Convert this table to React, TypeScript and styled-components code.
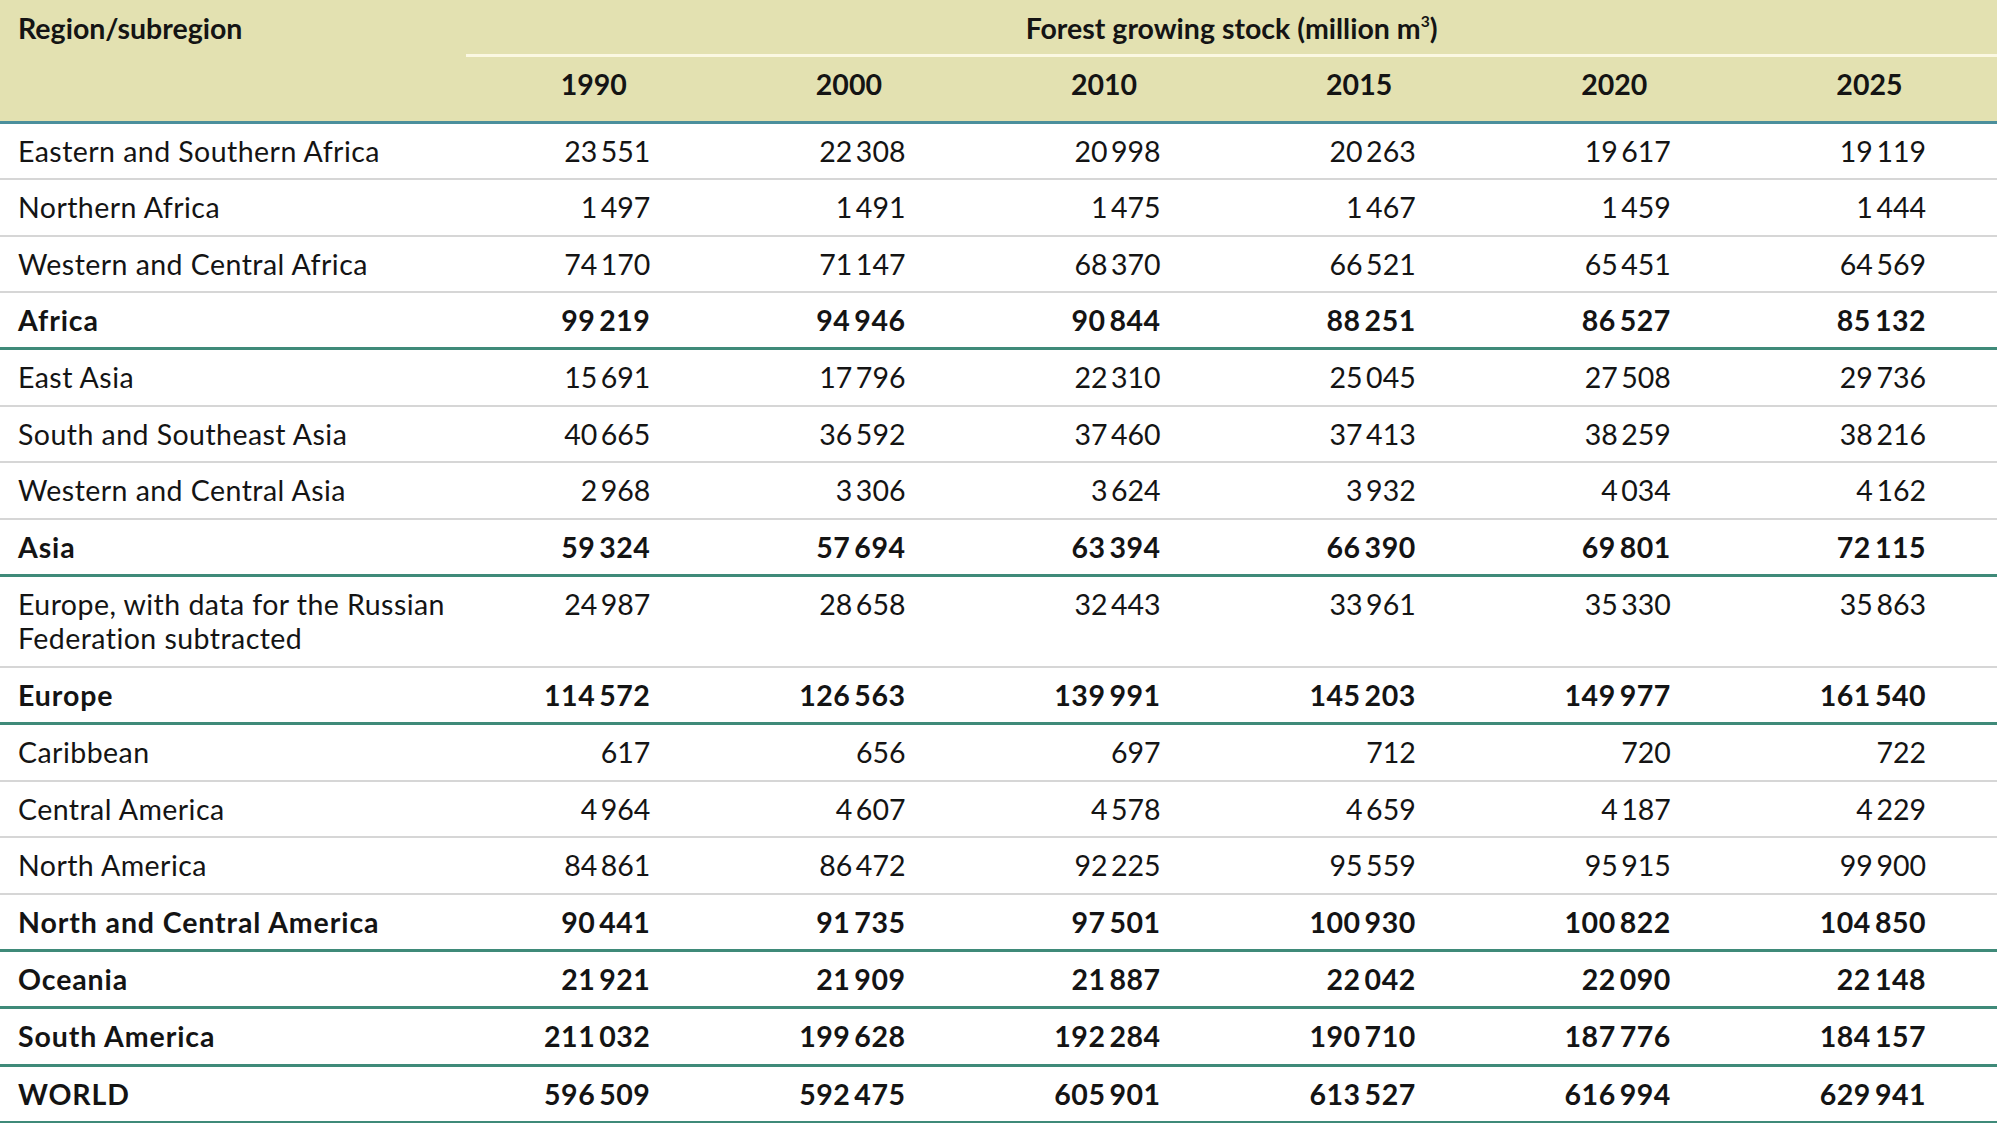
import React from "react";
import styled, { createGlobalStyle } from "styled-components";

const GlobalStyle = createGlobalStyle`
  html, body { margin: 0; padding: 0; background: #ffffff; }
  body { font-family: Lato, "Noto Sans", sans-serif; color: #141414; }
`;

const Table = styled.table`
  width: 1997px;
  table-layout: fixed;
  border-collapse: separate;
  border-spacing: 0;
  font-family: Lato, "Noto Sans", sans-serif;
  font-size: 28.5px;
  line-height: 34.4px;
`;

const Head = styled.thead`
  background: #e3e1b1;
`;

const RegionHead = styled.th`
  text-align: left;
  vertical-align: top;
  font-weight: 700;
  padding: 11px 0 0 18px;
  border-bottom: 3px solid #4b8f9c;
`;

const GroupHead = styled.th`
  text-align: center;
  font-weight: 700;
  padding: 11px 0 9px;
  border-bottom: 3px solid #fbf8e2;
`;

const YearHead = styled.th`
  text-align: center;
  font-weight: 700;
  padding: 10px 0 19px;
  border-bottom: 3px solid #4b8f9c;
`;

const Sup = styled.sup`
  font-size: 0.55em;
  line-height: 0;
  vertical-align: 0.75em;
`;

const Cell = styled.td<{ $total: boolean; $num?: boolean }>`
  vertical-align: top;
  text-align: ${(p) => (p.$num ? "right" : "left")};
  padding: ${(p) => (p.$num ? "10px 71px 10px 0" : "10px 0 10px 18px")};
  font-weight: ${(p) => (p.$total ? 700 : 400)};
  letter-spacing: ${(p) =>
    p.$num ? (p.$total ? "0.5px" : "0") : p.$total ? "0.9px" : "0.45px"};
  border-bottom: ${(p) => (p.$total ? "3px solid #3f8a79" : "2px solid #d6d6d6")};
  white-space: ${(p) => (p.$num ? "nowrap" : "normal")};
`;

type Row = { name: string; values: string[]; total?: boolean };

const rows: Row[] = [
  { name: "Eastern and Southern Africa", values: ["23 551", "22 308", "20 998", "20 263", "19 617", "19 119"] },
  { name: "Northern Africa", values: ["1 497", "1 491", "1 475", "1 467", "1 459", "1 444"] },
  { name: "Western and Central Africa", values: ["74 170", "71 147", "68 370", "66 521", "65 451", "64 569"] },
  { name: "Africa", total: true, values: ["99 219", "94 946", "90 844", "88 251", "86 527", "85 132"] },
  { name: "East Asia", values: ["15 691", "17 796", "22 310", "25 045", "27 508", "29 736"] },
  { name: "South and Southeast Asia", values: ["40 665", "36 592", "37 460", "37 413", "38 259", "38 216"] },
  { name: "Western and Central Asia", values: ["2 968", "3 306", "3 624", "3 932", "4 034", "4 162"] },
  { name: "Asia", total: true, values: ["59 324", "57 694", "63 394", "66 390", "69 801", "72 115"] },
  { name: "Europe, with data for the Russian Federation subtracted", values: ["24 987", "28 658", "32 443", "33 961", "35 330", "35 863"] },
  { name: "Europe", total: true, values: ["114 572", "126 563", "139 991", "145 203", "149 977", "161 540"] },
  { name: "Caribbean", values: ["617", "656", "697", "712", "720", "722"] },
  { name: "Central America", values: ["4 964", "4 607", "4 578", "4 659", "4 187", "4 229"] },
  { name: "North America", values: ["84 861", "86 472", "92 225", "95 559", "95 915", "99 900"] },
  { name: "North and Central America", total: true, values: ["90 441", "91 735", "97 501", "100 930", "100 822", "104 850"] },
  { name: "Oceania", total: true, values: ["21 921", "21 909", "21 887", "22 042", "22 090", "22 148"] },
  { name: "South America", total: true, values: ["211 032", "199 628", "192 284", "190 710", "187 776", "184 157"] },
  { name: "WORLD", total: true, values: ["596 509", "592 475", "605 901", "613 527", "616 994", "629 941"] },
];

const years = ["1990", "2000", "2010", "2015", "2020", "2025"];

const fmt = (v: string) => v.replace(" ", "\u2009");

export default function App() {
  return (
    <>
      <GlobalStyle />
      <Table>
        <colgroup>
          <col style={{ width: 466 }} />
          {years.map((y) => (
            <col key={y} style={{ width: 255 }} />
          ))}
        </colgroup>
        <Head>
          <tr>
            <RegionHead rowSpan={2}>Region/subregion</RegionHead>
            <GroupHead colSpan={6}>
              Forest growing stock (million m<Sup>3</Sup>)
            </GroupHead>
          </tr>
          <tr>
            {years.map((y) => (
              <YearHead key={y}>{y}</YearHead>
            ))}
          </tr>
        </Head>
        <tbody>
          {rows.map((r) => (
            <tr key={r.name}>
              <Cell $total={!!r.total}>{r.name}</Cell>
              {r.values.map((v, i) => (
                <Cell key={i} $total={!!r.total} $num>
                  {fmt(v)}
                </Cell>
              ))}
            </tr>
          ))}
        </tbody>
      </Table>
    </>
  );
}
